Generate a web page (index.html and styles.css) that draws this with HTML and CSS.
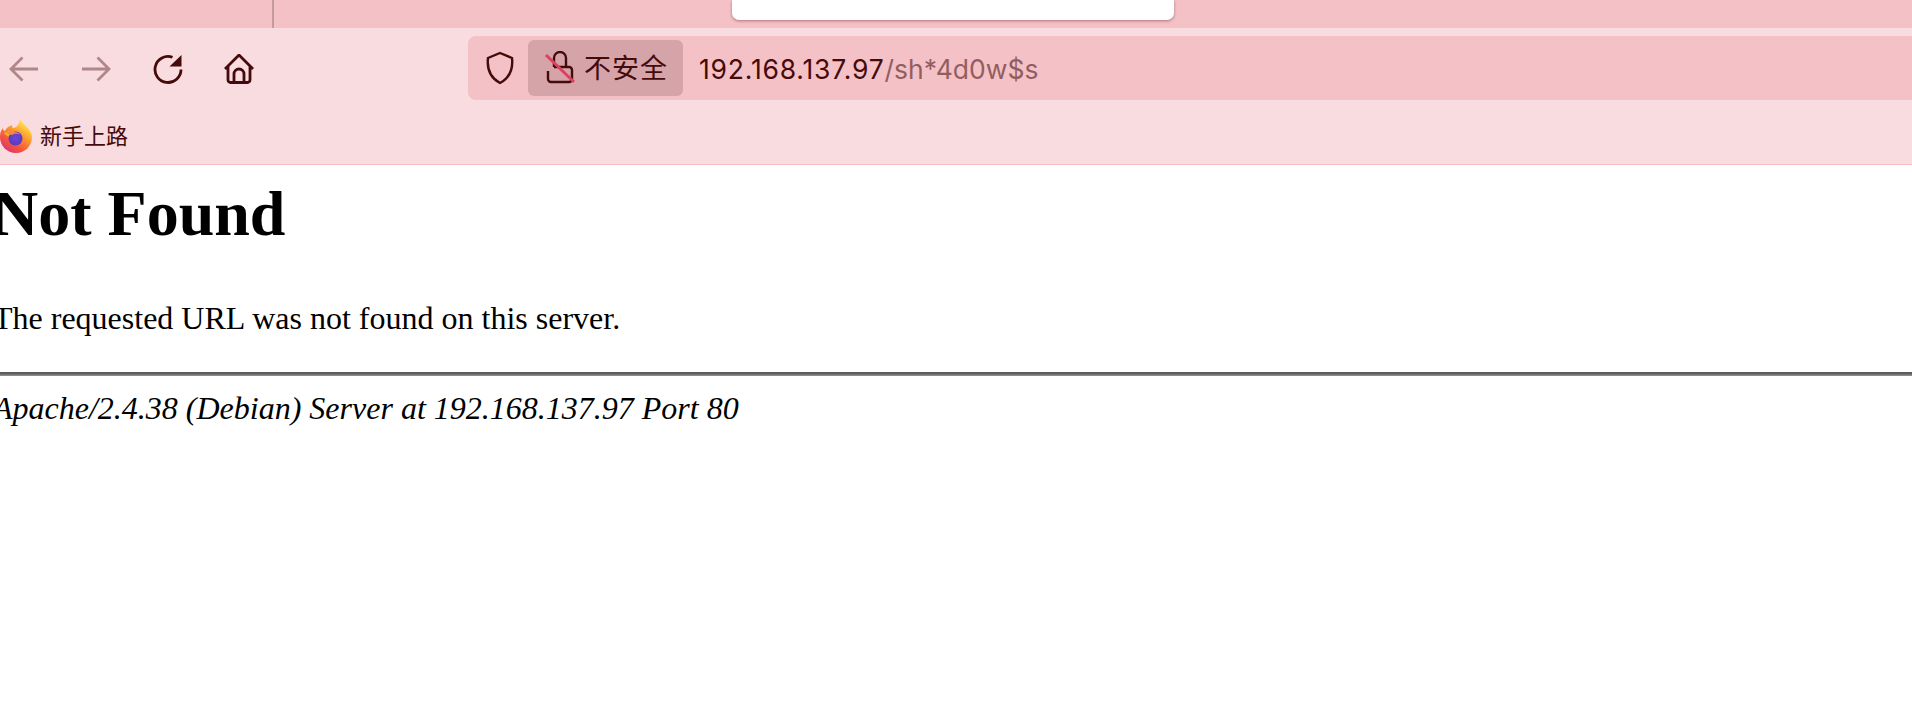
FILE: index.html
```html
<!DOCTYPE html>
<html lang="zh">
<head>
<meta charset="utf-8">
<title>404 Not Found</title>
<link rel="stylesheet" href="styles.css">
</head>
<body>
<header class="chrome">
  <div class="tabstrip">
    <div class="tab-sep"></div>
    <div class="tab-active"></div>
  </div>
  <div class="toolbar">
    <div class="nav">
      <svg class="icon back" viewBox="0 0 30 30"><path d="M29 15H2M13.500 3.500 2 15l11.500 11.500"/></svg>
      <svg class="icon fwd" viewBox="0 0 30 30"><path d="M1 15h27M16.500 3.500 28 15 16.500 26.500"/></svg>
      <svg class="icon reload" viewBox="0 0 30 30"><path d="M28 15.500A13 13 0 1 1 19.500 3.300"/><path class="fill" d="M28.500 1v11.500H16.500z"/></svg>
      <svg class="icon home" viewBox="0 0 30 30"><path d="M1 15 15 1l14 14M4 12.500V26a2.500 2.500 0 0 0 2.500 2.500h17A2.500 2.500 0 0 0 26 26V12.500M10 28.500V20a5 5 0 0 1 10 0v8.500"/></svg>
    </div>
    <div class="urlbar">
      <svg class="shield" viewBox="0 0 30 34"><path d="M15 2 27 7c1 9-1 19-12 25C4 26 2 16 3 7z"/></svg>
      <div class="insecure">
        <svg class="lock" viewBox="0 0 32 34"><path d="M10 16V7a6 6 0 0 1 12 0v9M4 20v8a3 3 0 0 0 3 3h18a3 3 0 0 0 3-3v-9a3 3 0 0 0-3-3H10"/><path class="slash" d="m2 4 28 27"/></svg>
        <span class="insecure-label">不安全</span>
      </div>
      <div class="url"><span class="host">192.168.137.97</span><span class="path">/sh*4d0w$s</span></div>
    </div>
  </div>
  <div class="bookmarks">
    <svg class="fox" viewBox="0 0 32 34">
      <defs>
        <linearGradient id="foxA" x1="0.800" y1="0.100" x2="0.200" y2="1">
          <stop offset="0" stop-color="#ffe94f"/><stop offset="0.350" stop-color="#ff9a2e"/><stop offset="0.700" stop-color="#f4513f"/><stop offset="1" stop-color="#d9307f"/>
        </linearGradient>
        <radialGradient id="foxB" cx="0.500" cy="0.450" r="0.600">
          <stop offset="0" stop-color="#7a3fe0"/><stop offset="1" stop-color="#4a3fb5"/>
        </radialGradient>
      </defs>
      <path fill="url(#foxA)" d="M20 0c1 3 4 5 7 8 3 3 5 7 5 10 0 9-7 16-16 16S0 27 0 18c0-4 1-7 3-9 0 2 1 3 2 3 1-3 4-5 7-6 0 1 0 2 1 3 4 0 6-4 7-9z"/>
      <path fill="#ffb52e" d="M4 14c3-1 6-2 9-1l2 3-5 3c-2-2-4-3-6-5z"/>
      <circle cx="15.500" cy="19.500" r="7" fill="url(#foxB)"/>
      <path fill="#f4883a" d="M6 14c3-1 6-2 8-1 3 0 5 1 6 3-3-2-6-1-8 0-2 0-5-1-6-2z"/>
    </svg>
    <span class="bm-label">新手上路</span>
  </div>
</header>
<main class="page">
  <h1 class="title">Not Found</h1>
  <p class="message">The requested URL was not found on this server.</p>
  <hr class="rule">
  <address class="signature">Apache/2.4.38 (Debian) Server at 192.168.137.97 Port 80</address>
</main>
</body>
</html>
```
FILE: styles.css
```css
html, body {
  margin: 0;
  padding: 0;
  background: #fff;
  overflow: hidden;
}
body {
  width: 1912px;
  height: 702px;
}
.chrome {
  background: #f9dcdf;
  color: #450a0a;
  border-bottom: 1px solid #f3c1c6;
  font-family: Inter, "Noto Sans CJK SC", sans-serif;
}
.tabstrip {
  height: 28px;
  background: #f3c1c6;
  display: flex;
  align-items: flex-start;
}
.tab-sep {
  width: 2px;
  height: 28px;
  margin-left: 272px;
  background: #c49a9f;
}
.tab-active {
  width: 442px;
  height: 20px;
  margin-left: 458px;
  background: #fff;
  border-radius: 0 0 7px 7px;
  box-shadow: 0 1px 3px rgba(90, 20, 30, 0.45);
}
.toolbar {
  height: 64px;
  margin-top: 8px;
  display: flex;
  align-items: center;
}
.nav {
  width: 468px;
  display: flex;
  align-items: center;
  flex: none;
  padding-top: 1px;
}
.icon {
  width: 30px;
  height: 30px;
  fill: none;
  stroke: #450a0a;
  stroke-width: 2.800;
  flex: none;
}
.icon .fill {
  fill: #450a0a;
  stroke: none;
}
.back {
  margin-left: 9px;
  opacity: 0.4;
}
.fwd {
  margin-left: 42px;
  opacity: 0.4;
}
.reload {
  margin-left: 42px;
}
.home {
  margin-left: 41px;
}
.urlbar {
  flex: 1;
  height: 64px;
  background: #f3c1c6;
  border-radius: 8px 0 0 8px;
  display: flex;
  align-items: center;
}
.shield {
  width: 30px;
  height: 34px;
  margin-left: 17px;
  fill: none;
  stroke: #450a0a;
  stroke-width: 2.400;
  flex: none;
}
.insecure {
  width: 155px;
  height: 56px;
  margin-left: 13px;
  background: #d4a4a8;
  border-radius: 6px;
  display: flex;
  align-items: center;
  flex: none;
}
.lock {
  width: 32px;
  height: 34px;
  margin-left: 16px;
  fill: none;
  stroke: #450a0a;
  stroke-width: 2.400;
  flex: none;
}
.lock .slash {
  stroke: #e0405f;
  stroke-width: 3;
}
.insecure-label {
  margin-left: 8px;
  padding-top: 2px;
  font-size: 27px;
  line-height: 32px;
  letter-spacing: 1px;
}
.url {
  margin-left: 16px;
  padding-top: 2px;
  font-size: 26.500px;
  line-height: 32px;
  white-space: nowrap;
}
.host {
  letter-spacing: 0.800px;
}
.path {
  color: #450a0a;
  opacity: 0.55;
}
.bookmarks {
  box-sizing: border-box;
  height: 64px;
  padding-top: 8px;
  display: flex;
  align-items: center;
}
.fox {
  width: 32px;
  height: 34px;
  flex: none;
}
.bm-label {
  margin-left: 8px;
  font-size: 22px;
  line-height: 28px;
}
.page {
  margin-left: -7px;
  width: 1919px;
  color: #000;
  font-family: "Liberation Serif", "Times New Roman", serif;
}
.title {
  margin: 12px 0 0 -1px;
  font-size: 64px;
  line-height: 74px;
  font-weight: 700;
}
.message {
  margin: 49px 0 0;
  font-size: 32px;
  line-height: 37px;
}
.rule {
  margin: 35px 0 0;
  height: 1px;
  border: 0;
  border-top: 2px solid #5d5d5d;
  border-bottom: 1px solid #8a8a8a;
  background: #777;
}
.signature {
  margin-top: 14px;
  font-size: 32px;
  line-height: 37px;
  font-style: italic;
}
```
